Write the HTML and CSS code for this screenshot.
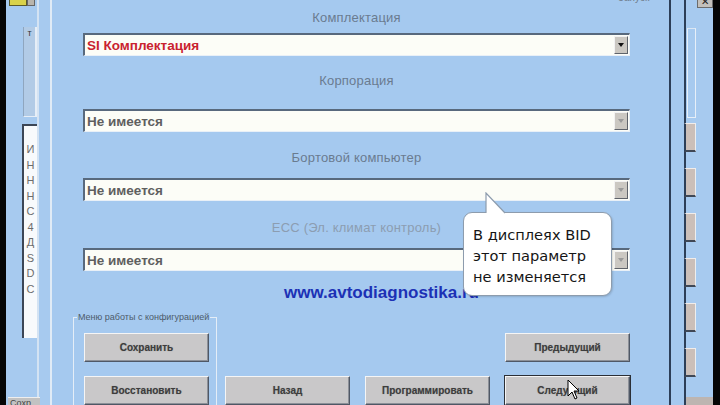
FILE: index.html
```html
<!DOCTYPE html>
<html lang="ru">
<head>
    <meta charset="UTF-8">
    <meta name="viewport" content="width=device-width, initial-scale=1.0">
    <title>Конфигурация</title>
    <link rel="stylesheet" href="styles.css">
</head>
<body>
    <div class="screen">
        <div class="edge edge-left"></div>

        <aside class="side-left">
            <div class="side-col">
                <div class="side-top">
                    <span class="app-icon"></span>
                    <span class="mini-box"></span>
                </div>
                <div class="track"><span class="track-mark">т</span></div>
                <ul class="letters">
                    <li>И</li>
                    <li>Н</li>
                    <li>Н</li>
                    <li>Н</li>
                    <li>С</li>
                    <li>4</li>
                    <li>Д</li>
                    <li>S</li>
                    <li>D</li>
                    <li>С</li>
                </ul>
            </div>
            <div class="side-btn">Сохр</div>
        </aside>

        <main class="dialog">
            <span class="top-caption">Запуск</span>

            <div class="field">
                <span class="field-label">Комплектация</span>
                <div class="combo">
                    <span class="combo-text red">SI Комплектация</span>
                    <span class="combo-arrow"></span>
                </div>
            </div>

            <div class="field field-corp">
                <span class="field-label">Корпорация</span>
                <div class="combo">
                    <span class="combo-text">Не имеется</span>
                    <span class="combo-arrow off"></span>
                </div>
            </div>

            <div class="field field-board">
                <span class="field-label">Бортовой компьютер</span>
                <div class="combo">
                    <span class="combo-text">Не имеется</span>
                    <span class="combo-arrow off"></span>
                </div>
            </div>

            <div class="field field-ecc">
                <span class="field-label muted">ECC (Эл. климат контроль)</span>
                <div class="combo">
                    <span class="combo-text">Не имеется</span>
                    <span class="combo-arrow off"></span>
                </div>
            </div>

            <div class="site">www.avtodiagnostika.ru</div>

            <div class="actions">
                <fieldset class="group">
                    <legend>Меню работы с конфигурацией</legend>
                    <button class="btn">Сохранить</button>
                    <button class="btn">Восстановить</button>
                </fieldset>
                <div class="nav">
                    <button class="btn btn-prev">Предыдущий</button>
                    <button class="btn row-two">Назад</button>
                    <button class="btn row-two">Программировать</button>
                    <button class="btn row-two focused">Следующий</button>
                </div>
            </div>

            <div class="callout">
                <svg class="callout-tail" width="22" height="23" viewBox="0 0 22 23">
                    <path d="M1 23 L1 1 L20 21 L20 23 Z" fill="#ffffff"/>
                    <path d="M1 21 L1 1 L20 21" fill="none" stroke="#8d9cad" stroke-width="1.2"/>
                </svg>
                <p>В дисплеях BID<br>этот параметр<br>не изменяется</p>
            </div>

            <svg class="cursor" width="13" height="21" viewBox="0 0 13 21">
                <path d="M1 1 L1 17 L5 13 L8 20 L10 19 L7 12 L12 12 Z" fill="#ffffff" stroke="#000000" stroke-width="1"/>
            </svg>
        </main>

        <div class="gutter"></div>

        <aside class="side-right">
            <div class="close-row"><span class="close-btn">✕</span></div>
            <div class="rtrack"></div>
            <div class="rbtns">
                <span class="rbtn"></span>
                <span class="rbtn"></span>
                <span class="rbtn"></span>
                <span class="rbtn"></span>
                <span class="rbtn"></span>
                <span class="rbtn"></span>
            </div>
            <div class="rbottom"></div>
        </aside>

        <div class="edge edge-right"></div>
    </div>
</body>
</html>
```

FILE: styles.css
```css
* {
    margin: 0;
    padding: 0;
    box-sizing: border-box;
}

body {
    background: #000;
    font-family: 'Liberation Sans', Arial, sans-serif;
    overflow: hidden;
}

.screen {
    display: flex;
    width: 720px;
    height: 405px;
    overflow: hidden;
    background: #a5c9ef;
}

.edge {
    background: #050505;
    flex: none;
}

.edge-left {
    width: 6px;
}

.edge-right {
    width: 8px;
}

/* left window fragment */
.side-left {
    width: 44px;
    flex: none;
    display: flex;
    flex-direction: column;
    background: #a7caef;
}

.side-col {
    margin-left: 16px;
    width: 17px;
    border-right: 2px solid #d4e3f3;
    flex: 1;
    display: flex;
    flex-direction: column;
}

.side-top {
    display: flex;
    margin-left: -13px;
    height: 6px;
}

.app-icon {
    width: 18px;
    height: 6px;
    background: #d9d24a;
    border: 1px solid #5b5a2a;
    border-top: none;
}

.mini-box {
    width: 8px;
    height: 6px;
    background: #b9b5ad;
    border: 1px solid #666;
    border-top: none;
}

.track {
    margin-top: 21px;
    height: 90px;
    width: 14px;
    margin-left: 1px;
    border-left: 1px solid #8fa6bf;
    border-right: 2px solid #e6eef7;
    border-bottom: 1px solid #e6eef7;
    background: #b2cbe6;
}

.track-mark {
    display: block;
    font-size: 9px;
    color: #333;
    text-align: center;
    line-height: 10px;
    margin-top: 1px;
}

.letters {
    list-style: none;
    margin-top: 7px;
    height: 214px;
    width: 15px;
    background: #f8fafc;
    border-top: 2px solid #3c4656;
    border-left: 2px solid #3c4656;
    padding-top: 16px;
    font-size: 11px;
    line-height: 15.5px;
    color: #6c6c6c;
    text-align: center;
}

.side-btn {
    height: 8px;
    margin: 0 10px 0 2px;
    background: #c2c2c2;
    border-top: 1px solid #eee;
    font-size: 9px;
    line-height: 10px;
    color: #444;
    overflow: hidden;
    padding-left: 2px;
}

/* main dialog */
.dialog {
    flex: 1;
    position: relative;
    border-left: 2px solid #e0ebf6;
    border-right: 2px solid #2c3e57;
    padding: 11px 39px 0 31px;
    background: #a5c9ef;
}

.top-caption {
    position: absolute;
    top: -8px;
    left: 566px;
    font-size: 10px;
    color: #6f7d8c;
}

.field-label {
    display: block;
    text-align: center;
    height: 14px;
    line-height: 14px;
    font-size: 13px;
    color: #6a7b8f;
    letter-spacing: 0.2px;
    margin-bottom: 8px;
}

.field-label.muted {
    color: #8c9db1;
}

.field-corp .field-label {
    margin-top: 18px;
    margin-bottom: 21px;
}

.field-board .field-label {
    margin-top: 19px;
    margin-bottom: 13px;
}

.field-ecc .field-label {
    margin-top: 20px;
    margin-bottom: 13px;
}

.combo {
    display: flex;
    align-items: center;
    height: 23px;
    background: #fcfdf7;
    border-top: 2px solid #58697d;
    border-left: 2px solid #58697d;
    border-right: 1px solid #e9f0f7;
    border-bottom: 1px solid #e9f0f7;
}

.combo-text {
    flex: 1;
    padding-left: 2px;
    font-size: 13.5px;
    font-weight: bold;
    color: #5f5f5f;
}

.combo-text.red {
    color: #c9232f;
}

.combo-arrow {
    width: 14px;
    height: 18px;
    margin-right: 1px;
    background: #cbc8c2;
    border-top: 1px solid #f2f2f2;
    border-left: 1px solid #f2f2f2;
    border-right: 1px solid #5e636b;
    border-bottom: 1px solid #5e636b;
    display: flex;
    align-items: center;
    justify-content: center;
}

.combo-arrow::after {
    content: "";
    border-left: 3px solid transparent;
    border-right: 3px solid transparent;
    border-top: 4px solid #111;
}

.combo-arrow.off::after {
    border-top-color: #9a9a9a;
}

.site {
    margin-top: 12px;
    height: 20px;
    line-height: 20px;
    padding-left: 201px;
    font-size: 17px;
    font-weight: bold;
    color: #1c31b5;
    white-space: nowrap;
}

.actions {
    display: flex;
    align-items: flex-start;
    margin-top: 9px;
    margin-left: -10px;
}

.group {
    width: 144px;
    min-width: 0;
    border: 1px solid #e4edf7;
    padding: 10px 7px 0 10px;
    display: flex;
    flex-direction: column;
    gap: 14px;
}

.group legend {
    font-size: 9px;
    line-height: 11px;
    color: #4d5b6b;
    padding: 0 1px;
    margin-left: -7px;
    white-space: nowrap;
}

.nav {
    display: grid;
    grid-template-columns: repeat(3, 125px);
    grid-template-rows: 29px 29px;
    gap: 14px 15px;
    margin-left: 8px;
    margin-top: 21px;
}

.btn-prev {
    grid-column: 3;
    grid-row: 1;
}

.row-two {
    grid-row: 2;
}

.btn {
    width: 125px;
    height: 29px;
    background: #c9c8c9;
    border: 1px solid;
    border-color: #f5f5f5 #4f5866 #4f5866 #f5f5f5;
    box-shadow: inset -1px -1px 0 #8c9098;
    font-family: 'Liberation Sans', Arial, sans-serif;
    font-size: 10px;
    font-weight: bold;
    color: #3d3d3d;
    text-shadow: 0 0 1px rgba(60, 60, 60, 0.4);
    cursor: pointer;
}

.btn.focused {
    outline: 1px solid #2b2f36;
}

.callout {
    position: absolute;
    left: 411px;
    top: 212px;
    width: 149px;
    height: 84px;
    background: #fff;
    border: 1px solid #8d9cad;
    border-radius: 9px;
    box-shadow: 1px 1px 2px rgba(0, 0, 0, 0.15);
    padding: 11px 0 0 9px;
    z-index: 2;
}

.callout-tail {
    position: absolute;
    left: 21px;
    top: -21px;
}

.callout p {
    font-family: 'DejaVu Sans', Verdana, sans-serif;
    font-size: 14.6px;
    line-height: 21px;
    color: #151515;
}

.cursor {
    position: absolute;
    left: 515px;
    top: 379px;
    z-index: 3;
}

/* right window fragment */
.gutter {
    width: 13px;
    flex: none;
    background: #a5c9ef;
}

.side-right {
    width: 29px;
    flex: none;
    border-left: 2px solid #2c3e57;
    display: flex;
    flex-direction: column;
    background: #a7caef;
}

.close-row {
    height: 8px;
    display: flex;
    justify-content: flex-end;
}

.close-btn {
    width: 16px;
    height: 8px;
    background: #c3c0bc;
    border: 1px solid #6b6b6b;
    border-top: none;
    font-size: 10px;
    line-height: 4px;
    text-align: center;
    color: #222;
    overflow: hidden;
}

.rtrack {
    margin-top: 20px;
    height: 90px;
    width: 9px;
    margin-left: 1px;
    border: 1px solid #e7eff8;
    border-top: 1px solid #dbe6f2;
}

.rbtns {
    margin-top: 5px;
    display: flex;
    flex-direction: column;
    gap: 16px;
    margin-left: -2px;
}

.rbtn {
    width: 12px;
    height: 29px;
    background: #cbbfb9;
    border-top: 1px solid #f1ecea;
    border-right: 1px solid #eee;
    border-bottom: 2px solid #3f4755;
    border-left: 2px solid #2c3e57;
}

.rbottom {
    margin-top: auto;
    height: 8px;
    background: #bdb5b1;
}
```
